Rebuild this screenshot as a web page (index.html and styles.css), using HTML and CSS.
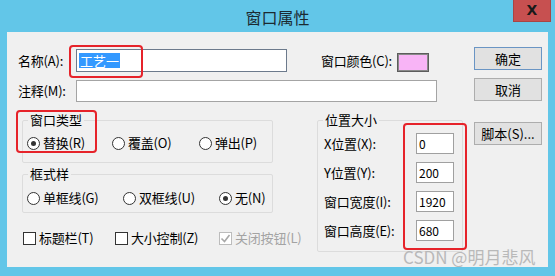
FILE: index.html
```html
<!DOCTYPE html>
<html lang="zh-CN">
<head>
  <meta charset="UTF-8">
  <title>窗口属性</title>
  <link rel="stylesheet" href="styles.css">
</head>
<body>
  <div class="window">
    <div class="titlebar">
      <span class="title">窗口属性</span>
      <span class="close">X</span>
    </div>
    <div class="client">
      <div class="main">
        <div class="row row-name">
          <span class="lbl">名称(A):</span>
          <div class="edit edit-name"><span class="sel">工艺一</span></div>
          <span class="color-lbl">窗口颜色(C):</span>
          <span class="swatch"></span>
        </div>
        <div class="row row-note">
          <span class="lbl">注释(M):</span>
          <div class="edit edit-note"></div>
        </div>
        <div class="lower">
          <div class="left-col">
            <fieldset class="group g-type">
              <legend>窗口类型</legend>
              <div class="opts opts-type">
                <span class="opt"><i class="radio on"></i>替换(R)</span>
                <span class="opt"><i class="radio"></i>覆盖(O)</span>
                <span class="opt"><i class="radio"></i>弹出(P)</span>
              </div>
            </fieldset>
            <fieldset class="group g-frame">
              <legend>框式样</legend>
              <div class="opts opts-frame">
                <span class="opt"><i class="radio"></i>单框线(G)</span>
                <span class="opt"><i class="radio"></i>双框线(U)</span>
                <span class="opt"><i class="radio on"></i>无(N)</span>
              </div>
            </fieldset>
            <div class="checks">
              <span class="opt"><i class="check"></i>标题栏(T)</span>
              <span class="opt"><i class="check"></i>大小控制(Z)</span>
              <span class="opt disabled"><i class="check on"><svg width="11" height="11" viewBox="0 0 11 11"><polyline points="1.5,5.5 4.5,8.5 9.5,2" fill="none" stroke="#a8a8a8" stroke-width="1.6"/></svg></i>关闭按钮(L)</span>
            </div>
          </div>
          <fieldset class="group g-pos">
            <legend>位置大小</legend>
            <div class="pos-grid">
              <span class="lbl">X位置(X):</span><div class="edit edit-num">0</div>
              <span class="lbl">Y位置(Y):</span><div class="edit edit-num">200</div>
              <span class="lbl">窗口宽度(I):</span><div class="edit edit-num">1920</div>
              <span class="lbl">窗口高度(E):</span><div class="edit edit-num">680</div>
            </div>
          </fieldset>
        </div>
      </div>
      <div class="side">
        <button class="btn btn-default">确定</button>
        <button class="btn">取消</button>
        <button class="btn btn-script">脚本(S)...</button>
      </div>
      <span class="mark mark-name"></span>
      <span class="mark mark-type"></span>
      <span class="mark mark-pos"></span>
    </div>
    <div class="watermark">CSDN @明月悲风</div>
  </div>
</body>
</html>
```

FILE: styles.css
```css
* { box-sizing: border-box; }
body { margin: 0; background: #62c6e8; font-family: "Noto Sans CJK SC", "Noto Sans", sans-serif; font-size: 13px; color: #000; }
.window { position: relative; width: 555px; height: 276px; padding: 0 7px; overflow: hidden; }

.titlebar { height: 32px; display: grid; grid-template-columns: 1fr auto 1fr; margin: 0 -7px; }
.title { grid-column: 2; font-size: 16px; line-height: 34px; color: #1c2a31; }
.close { grid-column: 3; justify-self: end; width: 38px; height: 22px; margin-right: 4px; background: #c75050; border: 1px solid #a84545; border-top: 0; font: bold 14px/21px "DejaVu Sans", sans-serif; color: #1a1a1a; text-align: center; }

.client { position: relative; height: 235px; background: #f0f0f0; display: flex; padding: 17px 0 0 11px; }
.main { width: 448px; }
.side { width: 68px; margin: -2px 0 0 8px; display: flex; flex-direction: column; }

.row { display: flex; align-items: center; }
.row-name { height: 23px; }
.row-note { height: 22px; margin-top: 8px; }
.lbl { white-space: nowrap; line-height: 16px; letter-spacing: -0.2px; }
.row .lbl { width: 58px; }

.edit { background: #fff; border: 1px solid #a4a4a4; line-height: 16px; padding: 0 2px; }
.edit-name { width: 211px; height: 23px; border-color: #6c7a8c; padding: 3px 2px; }
.sel { display: inline-block; background: #3399ff; color: #fff; padding: 0 1px; line-height: 15px; font-size: 13px; }
.edit-note { width: 361px; height: 22px; }
.color-lbl { margin-left: auto; margin-right: 5px; line-height: 16px; letter-spacing: -0.2px; }
.swatch { align-self: flex-end; width: 32px; height: 19px; margin-right: 37px; background: #f8b4f6; border: 1px solid #5c5c5c; box-shadow: inset 0 0 0 1px #8a8a8a; }

.lower { display: grid; grid-template-columns: 251px 146px; column-gap: 44px; margin: 10px 0 0 4px; align-items: start; }
.group { margin: 0; padding: 0; border: 1px solid #dcdcdc; border-radius: 2px; min-width: 0; }
.group legend { margin-left: 5px; padding: 0 2px; line-height: 16px; }

.opts { display: grid; padding-left: 4px; height: 16px; }
.opts-type { grid-template-columns: 85px 87px auto; margin: 7px 0 11px; }
.g-frame { margin-top: 3px; }
.opts-frame { grid-template-columns: 96px 96px auto; margin: 8px 0 6px; }
.opt { display: flex; align-items: center; gap: 3px; line-height: 16px; white-space: nowrap; letter-spacing: -0.2px; }
.disabled { color: #a3a3a3; }

.radio { width: 13px; height: 13px; border: 1px solid #333; border-radius: 50%; background: #fff; display: flex; align-items: center; justify-content: center; }
.radio.on::after { content: ""; width: 5px; height: 5px; border-radius: 50%; background: #333; }
.check { width: 13px; height: 13px; border: 1px solid #333; background: #fff; display: flex; align-items: center; justify-content: center; }
.check.on { border-color: #bcbcbc; }

.checks { display: grid; grid-template-columns: 92px 104px auto; margin: 17px 0 0 1px; height: 16px; }

.pos-grid { display: grid; grid-template-columns: 92px 38px; row-gap: 8px; padding: 5px 0 10px 6px; align-items: center; }
.edit-num { height: 21px; padding: 2px 2px; border-color: #a0a0a0; font-size: 12px; }

.btn { height: 23px; font: 13px "Noto Sans CJK SC", sans-serif; background: #e1e1e1; border: 1px solid #adadad; padding: 0; color: #000; }
.btn + .btn { margin-top: 8px; }
.btn-default { border-color: #6a95c4; }
.btn-script { margin-top: 21px !important; }

.mark { position: absolute; border: 2px solid #e6232a; border-radius: 4px; }
.mark-name { left: 62px; top: 13px; width: 74px; height: 33px; }
.mark-type { left: 9px; top: 78px; width: 81px; height: 43px; }
.mark-pos { left: 396px; top: 91px; width: 64px; height: 127px; }

.watermark { position: absolute; left: 403px; top: 247px; font-size: 17px; line-height: 20px; color: #b9b9b9; white-space: nowrap; }
```
